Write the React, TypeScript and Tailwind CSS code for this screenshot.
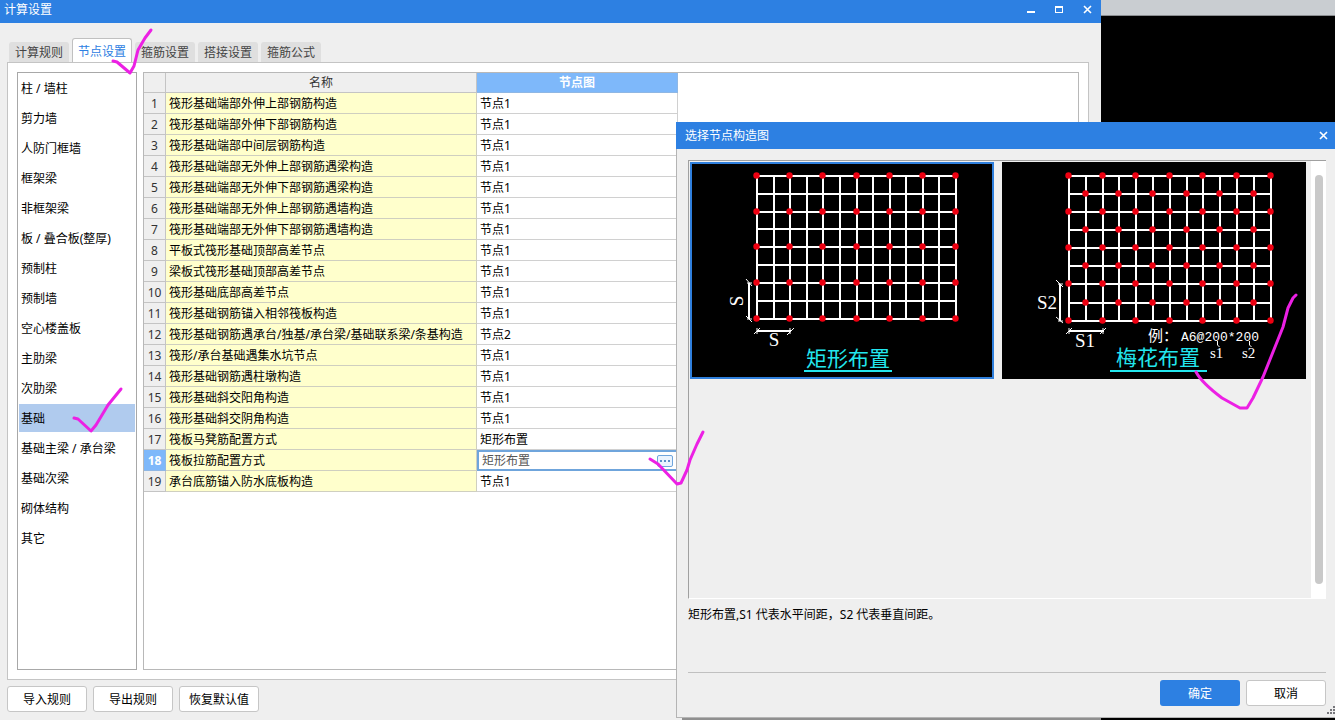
import { useState } from "react";

const TABS = ["计算规则", "节点设置", "箍筋设置", "搭接设置", "箍筋公式"];

const CATEGORIES = [
  "柱 / 墙柱",
  "剪力墙",
  "人防门框墙",
  "框架梁",
  "非框架梁",
  "板 / 叠合板(整厚)",
  "预制柱",
  "预制墙",
  "空心楼盖板",
  "主肋梁",
  "次肋梁",
  "基础",
  "基础主梁 / 承台梁",
  "基础次梁",
  "砌体结构",
  "其它",
];

const ROWS: [string, string][] = [
  ["筏形基础端部外伸上部钢筋构造", "节点1"],
  ["筏形基础端部外伸下部钢筋构造", "节点1"],
  ["筏形基础端部中间层钢筋构造", "节点1"],
  ["筏形基础端部无外伸上部钢筋遇梁构造", "节点1"],
  ["筏形基础端部无外伸下部钢筋遇梁构造", "节点1"],
  ["筏形基础端部无外伸上部钢筋遇墙构造", "节点1"],
  ["筏形基础端部无外伸下部钢筋遇墙构造", "节点1"],
  ["平板式筏形基础顶部高差节点", "节点1"],
  ["梁板式筏形基础顶部高差节点", "节点1"],
  ["筏形基础底部高差节点", "节点1"],
  ["筏形基础钢筋锚入相邻筏板构造", "节点1"],
  ["筏形基础钢筋遇承台/独基/承台梁/基础联系梁/条基构造", "节点2"],
  ["筏形/承台基础遇集水坑节点", "节点1"],
  ["筏形基础钢筋遇柱墩构造", "节点1"],
  ["筏形基础斜交阳角构造", "节点1"],
  ["筏形基础斜交阴角构造", "节点1"],
  ["筏板马凳筋配置方式", "矩形布置"],
  ["筏板拉筋配置方式", "矩形布置"],
  ["承台底筋锚入防水底板构造", "节点1"],
];

const EDITING_ROW = 17;

function CloseIcon() {
  return (
    <svg width="9" height="9" viewBox="0 0 9 9" aria-hidden="true">
      <path d="M1 1l7 7M8 1L1 8" stroke="#fff" strokeWidth="1.6" />
    </svg>
  );
}

function TitleButton({ label, children }: { label: string; children: React.ReactNode }) {
  return (
    <button
      type="button"
      aria-label={label}
      className="flex w-7 items-center justify-center self-stretch hover:bg-white/20"
    >
      {children}
    </button>
  );
}

function PlainButton({ children }: { children: React.ReactNode }) {
  return (
    <button
      type="button"
      className="h-[26px] w-20 rounded-[3px] border border-[#c6c6c6] bg-white pt-0.5 text-black hover:bg-[#f5f9ff]"
    >
      {children}
    </button>
  );
}

type GridProps = {
  xs: number[];
  ys: number[];
  staggered?: boolean;
};

function RebarGrid({ xs, ys, staggered }: GridProps) {
  const right = xs[xs.length - 1];
  const bottom = ys[ys.length - 1];
  return (
    <g>
      <g stroke="#fff" strokeWidth="2" shapeRendering="crispEdges">
        {xs.map((x) => (
          <line key={x} x1={x} x2={x} y1={ys[0]} y2={bottom} />
        ))}
        {ys.map((y) => (
          <line key={y} x1={xs[0]} x2={right} y1={y} y2={y} />
        ))}
      </g>
      <g fill="#ee0011">
        {ys.map((y, r) =>
          xs.map((x, c) => {
            const show = staggered ? r % 2 === c % 2 : r % 2 === 0 && c % 2 === 0;
            return show ? <circle key={`${r}-${c}`} cx={x - 0.5} cy={y - 0.5} r="3.2" /> : null;
          })
        )}
      </g>
    </g>
  );
}

const MONO_FONT = '"Liberation Mono", "Noto Sans CJK SC", monospace';
const SERIF_FONT = '"Liberation Serif", serif';

function RectLayout() {
  return (
    <svg width="304" height="217" viewBox="0 0 304 217" role="img" aria-label="矩形布置" className="block">
      <rect width="304" height="217" fill="#000" />
      <RebarGrid
        xs={[67, 84, 100, 117, 133, 150, 167, 183, 200, 216, 233, 249, 266]}
        ys={[14, 32, 50, 67, 85, 103, 121, 139, 157]}
      />
      <g stroke="#fff" fill="none">
        <path d="M59 121V157M67 169H101" strokeWidth="2" />
        <path d="M56 117l6 7M56 154l6 6M57 121h5M57 157h5M64 172l6-6M97 173l7-7M67 166v6M100 166v6" strokeWidth="1" />
      </g>
      <g fill="#fff" fontFamily={SERIF_FONT} fontSize="19">
        <text x="84" y="184" textAnchor="middle">S</text>
        <text transform="translate(53 139) rotate(-90)" textAnchor="middle">S</text>
      </g>
      <text x="158" y="204" textAnchor="middle" fill="#22e6ee" fontFamily={MONO_FONT} fontSize="21">
        矩形布置
      </text>
      <path d="M114 209H202" stroke="#22e6ee" strokeWidth="2" />
    </svg>
  );
}

function StaggeredLayout() {
  return (
    <svg width="304" height="217" viewBox="0 0 304 217" role="img" aria-label="梅花布置" className="block">
      <rect width="304" height="217" fill="#000" />
      <RebarGrid
        staggered
        xs={[67, 84, 101, 117, 134, 151, 168, 185, 201, 218, 235, 252, 269]}
        ys={[14, 32, 50, 68, 86, 104, 122, 141, 159]}
      />
      <g stroke="#fff" fill="none">
        <path d="M58 122V159M67 169H102" strokeWidth="2" />
        <path d="M54 118l7 7M54 155l7 6M56 122h5M56 159h5M64 172l6-6M98 172l6-6M67 166v6M101 166v6" strokeWidth="1" />
        <path d="M215.5 179v4l2 2M247.5 179v4l2 2" strokeWidth="1" />
      </g>
      <g fill="#fff" fontFamily={SERIF_FONT}>
        <text x="35" y="147" fontSize="19">S2</text>
        <text x="73" y="185" fontSize="19">S1</text>
        <text x="208" y="196" fontSize="15">s1</text>
        <text x="240" y="196" fontSize="15">s2</text>
      </g>
      <g fill="#fff" fontFamily={MONO_FONT}>
        <text x="146" y="179" fontSize="15">例：</text>
        <text x="179" y="179" fontSize="13">A6@200*200</text>
      </g>
      <text x="156" y="203" textAnchor="middle" fill="#22e6ee" fontFamily={MONO_FONT} fontSize="21">
        梅花布置
      </text>
      <path d="M108 209H205" stroke="#22e6ee" strokeWidth="2" />
    </svg>
  );
}

function NodeTable() {
  const [value, setValue] = useState(ROWS[EDITING_ROW][1]);
  return (
    <table className="w-[534px] table-fixed border-separate border-spacing-0">
      <colgroup>
        <col className="w-[22px]" />
        <col className="w-[311px]" />
        <col className="w-[201px]" />
      </colgroup>
      <thead>
        <tr className="h-5">
          <th className="border-r border-b border-[#c4c4c4] bg-[#efefef] p-0" />
          <th className="border-r border-b border-[#c4c4c4] bg-[#efefef] p-0 pt-px font-normal text-[#333]">名称</th>
          <th className="border-r border-b border-[#8fb7e4] bg-[#7eb8fa] p-0 pt-px font-bold text-white">节点图</th>
        </tr>
      </thead>
      <tbody>
        {ROWS.map(([name, node], i) => (
          <tr key={name} className="h-[21px]">
            <th
              scope="row"
              className={
                i === EDITING_ROW
                  ? "border-r border-b border-[#8fb7e4] bg-[#7eb8fa] p-0 pt-0.5 font-bold text-white"
                  : "border-r border-b border-[#c4c4c4] bg-[#efefef] p-0 pt-0.5 font-normal text-[#333]"
              }
            >
              {i + 1}
            </th>
            <td className="border-r border-b border-[#cfcfc0] bg-[#ffffcc] p-0 pt-0.5 pl-[3px] whitespace-nowrap">
              {name}
            </td>
            {i === EDITING_ROW ? (
              <td className="p-0">
                <div className="flex h-[21px] items-center border-2 border-[#6fa5dc] pr-[3px] pl-[3px]">
                  <input
                    aria-label={name}
                    value={value}
                    onChange={(e) => setValue(e.target.value)}
                    className="h-4 min-w-0 flex-1 bg-transparent text-[#555] outline-none"
                  />
                  <button
                    type="button"
                    aria-label="选择节点构造图"
                    className="flex h-3 w-4 items-center justify-center gap-0.5 rounded-[2px] border border-[#6fa5dc] bg-[#eaf4ff]"
                  >
                    <span className="size-0.5 bg-[#5a8fc8]" />
                    <span className="size-0.5 bg-[#5a8fc8]" />
                    <span className="size-0.5 bg-[#5a8fc8]" />
                  </button>
                </div>
              </td>
            ) : (
              <td className="border-r border-b border-[#d0d0d0] p-0 pt-0.5 pl-[3px]">{node}</td>
            )}
          </tr>
        ))}
      </tbody>
    </table>
  );
}

function SettingsWindow() {
  const [tab, setTab] = useState(1);
  const [category, setCategory] = useState(11);

  return (
    <section className="flex min-w-0 flex-1 flex-col bg-[#efefef]">
      <header className="flex h-[23px] shrink-0 items-center bg-[#2d80e2] pl-1 text-white">
        <h1 className="flex-1 pb-1">计算设置</h1>
        <TitleButton label="最小化">
          <span className="mt-px h-0.5 w-2 bg-white" />
        </TitleButton>
        <TitleButton label="最大化">
          <span className="mb-1 h-[7px] w-2 border border-t-2 border-white" />
        </TitleButton>
        <TitleButton label="关闭">
          <span className="mb-1">
            <CloseIcon />
          </span>
        </TitleButton>
      </header>

      <div className="flex min-h-0 flex-1 flex-col pt-[15px] pr-3 pb-2 pl-[7px]">
        <div role="tablist" className="-mb-px flex shrink-0 items-end gap-[3px] pl-0.5">
          {TABS.map((label, i) => (
            <button
              key={label}
              type="button"
              role="tab"
              aria-selected={i === tab}
              onClick={() => setTab(i)}
              className={
                i === tab
                  ? "h-[25px] w-[60px] rounded-t-[3px] border border-b-0 border-[#c0c0c0] bg-white pt-px text-[#2d80e2]"
                  : "mb-px h-5 w-[60px] rounded-t-[3px] bg-[#dfdfdf] pt-0.5 text-[#444]"
              }
            >
              {label}
            </button>
          ))}
        </div>

        <div className="flex min-h-0 flex-1 gap-1.5 border border-[#c4c4c4] bg-white p-[9px]">
          <ul className="flex w-[120px] shrink-0 flex-col gap-0.5 border border-[#a8a8a8] px-px py-px">
            {CATEGORIES.map((item, i) => (
              <li key={item}>
                <button
                  type="button"
                  onClick={() => setCategory(i)}
                  className={
                    i === category
                      ? "block h-7 w-full bg-[#b0cbee] pt-0.5 pl-0.5 text-left"
                      : "block h-7 w-full pt-0.5 pl-0.5 text-left hover:bg-[#e4eefa]"
                  }
                >
                  {item}
                </button>
              </li>
            ))}
          </ul>
          <div className="min-w-0 flex-1 overflow-hidden border border-[#b8b8b8]">
            <NodeTable />
          </div>
        </div>

        <div className="mt-1.5 flex shrink-0 gap-1.5">
          <PlainButton>导入规则</PlainButton>
          <PlainButton>导出规则</PlainButton>
          <PlainButton>恢复默认值</PlainButton>
        </div>
      </div>
    </section>
  );
}

function NodeDialog() {
  const [selected, setSelected] = useState(0);
  return (
    <section
      role="dialog"
      aria-label="选择节点构造图"
      className="absolute top-[122px] right-0 bottom-0.5 left-[676px] flex flex-col border-b border-l border-[#b4b4b4] bg-[#efefef] shadow-[6px_2px_0_rgba(0,0,0,0.4)]"
    >
      <header className="-ml-px flex h-[27px] shrink-0 items-center bg-[#2d80e2] pl-[9px] text-white">
        <h2 className="flex-1">选择节点构造图</h2>
        <button type="button" aria-label="关闭" className="flex w-6 items-center justify-center self-stretch">
          <CloseIcon />
        </button>
      </header>

      <div className="flex min-h-0 flex-1 flex-col pt-[11px] pr-[9px] pb-[11px] pl-[11px]">
        <div className="flex min-h-0 flex-1 border-t border-b border-l border-t-[#a0a0a0] border-b-white border-l-[#a0a0a0]">
          <div className="flex min-w-0 flex-1 items-start gap-2 pt-px pl-px">
            {[RectLayout, StaggeredLayout].map((Drawing, i) => (
              <button
                key={i}
                type="button"
                aria-pressed={i === selected}
                onClick={() => setSelected(i)}
                className={
                  i === selected
                    ? "relative shrink-0 after:absolute after:inset-0 after:border-2 after:border-[#2f7fdc]"
                    : "relative shrink-0"
                }
              >
                <Drawing />
              </button>
            ))}
          </div>
          <div className="flex w-[15px] justify-center bg-white pt-3.5 pb-3.5">
            <div className="w-2 rounded-full bg-[#c9c9c9]" />
          </div>
        </div>

        <p className="h-[73px] shrink-0 pt-[7px]">矩形布置,S1 代表水平间距，S2 代表垂直间距。</p>

        <div className="flex shrink-0 justify-end gap-1.5 border-t border-[#c0c0c0] pt-[7px]">
          <button type="button" className="h-[26px] w-20 rounded-[3px] bg-[#2d80e2] pt-0.5 text-white hover:bg-[#246fc8]">
            确定
          </button>
          <PlainButton>取消</PlainButton>
        </div>
      </div>

      <svg className="absolute right-0 bottom-0.5" width="9" height="9" viewBox="0 0 9 9" aria-hidden="true">
        <path
          d="M7 0h2v2H7zM4 3h2v2H4zM7 3h2v2H7zM1 6h2v2H1zM4 6h2v2H4zM7 6h2v2H7z"
          fill="#77777c"
        />
      </svg>
    </section>
  );
}

function PenMarks() {
  return (
    <svg
      className="pointer-events-none absolute top-0 left-0"
      width="1335"
      height="720"
      viewBox="0 0 1335 720"
      fill="none"
      stroke="#ec20e4"
      strokeWidth="3"
      strokeLinecap="round"
      strokeLinejoin="round"
      aria-hidden="true"
    >
      <path d="M113 61L117 62L130 73L134 66L138 50L145 38L151 30" />
      <path d="M74 418L78 419L91 431L96 425L108 405L121 389" />
      <path d="M650 459L658 464L677 484L681 483L687 470L690 460L697 444L703 432" />
      <path d="M1196 372Q1202 383 1222 398L1240 408H1247L1253 398L1263 377L1283 327L1288 308L1293 298L1296 295" />
    </svg>
  );
}

export default function App() {
  return (
    <main className='relative flex h-screen min-h-[600px] overflow-hidden bg-black font-["Noto_Sans","Noto_Sans_CJK_SC",sans-serif] text-[12px] leading-[18px] text-black'>
      <SettingsWindow />
      <div className="w-[234px] shrink-0">
        <div className="h-4 border-b border-[#8a8d90] bg-[#c9cdd1]" />
      </div>
      <NodeDialog />
      <PenMarks />
    </main>
  );
}
